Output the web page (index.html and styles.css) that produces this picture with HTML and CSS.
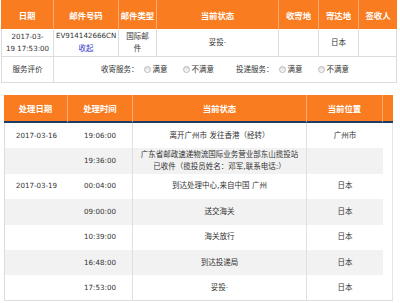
FILE: index.html
```html
<!DOCTYPE html>
<html lang="zh-CN">
<head>
<meta charset="utf-8">
<title>邮件跟踪</title>
<link rel="stylesheet" href="styles.css">
</head>
<body>
<div class="page">
  <table class="mail">
    <colgroup>
      <col class="c-date"><col class="c-no"><col class="c-type"><col class="c-state"><col class="c-from"><col class="c-to"><col class="c-sign">
    </colgroup>
    <thead>
      <tr><th>日期</th><th>邮件号码</th><th>邮件类型</th><th>当前状态</th><th>收寄地</th><th>寄达地</th><th class="last">签收人</th></tr>
    </thead>
    <tbody>
      <tr class="main">
        <td class="first num">2017-03-<br>19 17:53:00</td>
        <td class="num">EV914142666CN<br><a class="toggle">收起</a></td>
        <td>国际邮<br>件</td>
        <td>妥投·</td>
        <td></td>
        <td>日本</td>
        <td></td>
      </tr>
      <tr class="rate">
        <td class="first">服务评价</td>
        <td colspan="6">
          <span class="group">收寄服务：<span class="opt"><span class="radio"></span>满意</span><span class="opt wide"><span class="radio"></span>不满意</span></span><span class="group second">投递服务：<span class="opt"><span class="radio"></span>满意</span><span class="opt wide"><span class="radio"></span>不满意</span></span>
        </td>
      </tr>
    </tbody>
  </table>

  <table class="track">
    <colgroup>
      <col class="t-date"><col class="t-time"><col class="t-state"><col class="t-place"><col class="t-pad">
    </colgroup>
    <thead>
      <tr><th>处理日期</th><th>处理时间</th><th>当前状态</th><th>当前位置</th><th class="pad"></th></tr>
    </thead>
    <tbody>
      <tr><td class="first num">2017-03-16</td><td class="num sep">19:06:00</td><td class="sep">离开广州市 发往香港（经转）</td><td>广州市</td><td class="pad"></td></tr>
      <tr class="alt"><td class="first num"></td><td class="num sep">19:36:00</td><td class="sep two">广东省邮政速递物流国际业务营业部东山揽投站<br>已收件（揽投员姓名：邓军,联系电话:）</td><td></td><td class="pad"></td></tr>
      <tr><td class="first num">2017-03-19</td><td class="num sep">00:04:00</td><td class="sep">到达处理中心,来自中国 广州</td><td>日本</td><td class="pad"></td></tr>
      <tr class="alt"><td class="first num"></td><td class="num sep">09:00:00</td><td class="sep">送交海关</td><td>日本</td><td class="pad"></td></tr>
      <tr><td class="first num"></td><td class="num sep">10:39:00</td><td class="sep">海关放行</td><td>日本</td><td class="pad"></td></tr>
      <tr class="alt"><td class="first num"></td><td class="num sep">16:48:00</td><td class="sep">到达投递局</td><td>日本</td><td class="pad"></td></tr>
      <tr class="end"><td class="first num"></td><td class="num sep">17:53:00</td><td class="sep">妥投·</td><td>日本</td><td class="pad"></td></tr>
    </tbody>
  </table>
</div>
</body>
</html>
```
FILE: styles.css
```css
* { box-sizing: border-box; }

body {
  margin: 0;
  background: #fff;
  color: #333;
  font-family: "DejaVu Sans", "Noto Sans CJK SC", sans-serif;
  font-size: 7.5px;
  line-height: 12px;
}

.page {
  padding: 0 3px 0 1px;
}

table {
  border-collapse: separate;
  border-spacing: 0;
  table-layout: fixed;
}

th {
  background: #f97c20;
  color: #fff;
  font-family: "Noto Sans CJK SC", sans-serif;
  font-weight: bold;
  font-size: 8.4px;
  padding: 0;
  text-align: center;
  border-right: 1px solid #fbac72;
}

td {
  padding: 0 2px;
  text-align: center;
  vertical-align: middle;
}

.num { font-size: 7.1px; }

/* ---- top table ---- */
.mail { width: 396px; }
.c-date { width: 53px; }
.c-no { width: 65px; }
.c-type { width: 38px; }
.c-state { width: 122px; }
.c-from { width: 40px; }
.c-to { width: 40px; }
.c-sign { width: 38px; }

.mail th { height: 29px; }
.mail th.last { border-right: 0; }

.mail td {
  border-right: 1px solid #dcdcdc;
  border-bottom: 1px solid #dcdcdc;
}
.mail td.first { border-left: 1px solid #dcdcdc; }
.mail tr.main td { height: 28px; }
.mail tr.rate td { height: 26px; }

.toggle {
  color: #3535c8;
  font-family: "Noto Sans CJK SC", sans-serif;
  font-size: 7.5px;
  text-decoration: none;
}

.group { display: inline-flex; align-items: center; }
.group.second { margin-left: 22px; }
.opt { display: inline-flex; align-items: center; margin-left: 5px; }
.opt.wide { margin-left: 15px; }
.radio {
  display: inline-block;
  width: 7px;
  height: 7px;
  margin-right: 2px;
  border-radius: 50%;
  border: 1px solid #b9b9b9;
  background: linear-gradient(#dedede, #fbfbfb);
}

/* ---- tracking table ---- */
.track {
  width: 389px;
  margin: 12px 0 0 3px;
}
.t-date { width: 64px; }
.t-time { width: 65px; }
.t-state { width: 174px; }
.t-place { width: 76px; }
.t-pad { width: 10px; }

.track th {
  height: 28px;
  border-bottom: 2px solid #1f3c66;
}
.track th.pad { border-right: 0; }

.track td { height: 25.4px; }
.track td.first { border-left: 1px solid #dcdcdc; }
.track td.sep { border-right: 1px solid #e0e0e0; }
.track td.pad { border-right: 1px solid #e4e4e4; }
.track tr.alt td { background: #f2f2f2; }
.track tr.alt td.pad { background: #fff; }
.track tr.end td { border-bottom: 1px solid #dcdcdc; }
.track td.two { line-height: 12px; }
```
